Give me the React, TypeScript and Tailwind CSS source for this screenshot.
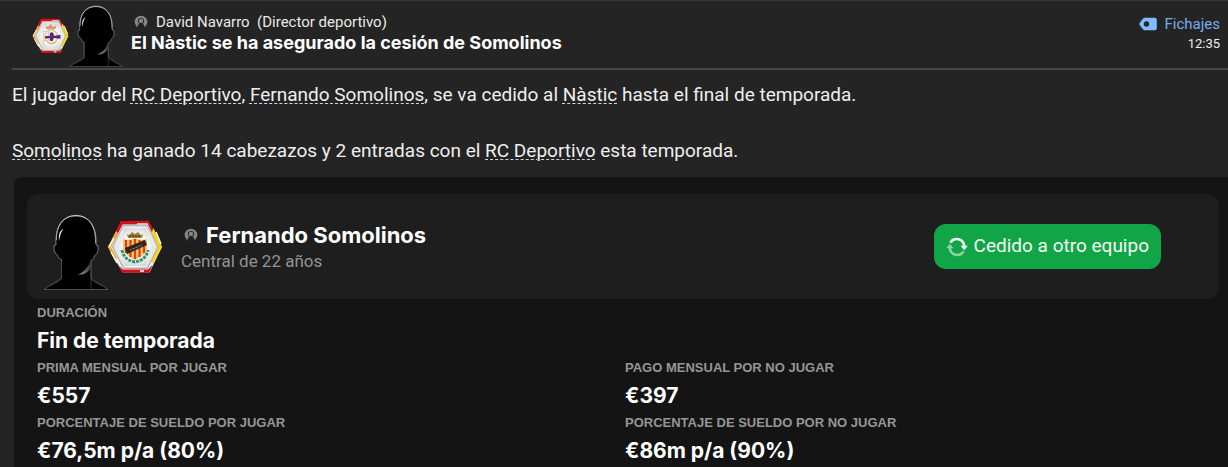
import type { ReactNode } from "react";

type TextLinkProps = {
  children: ReactNode;
};

type TermProps = {
  label: string;
  value: string;
  className?: string;
};

function TextLink({ children }: TextLinkProps) {
  return (
    <a href="#" className="underline decoration-gray-300 decoration-dashed decoration-1 underline-offset-2">
      {children}
    </a>
  );
}

function Term({ label, value, className = "" }: TermProps) {
  return (
    <div className={className}>
      <dt className="font-['Liberation_Sans',sans-serif] text-[13px] leading-6 font-bold text-[#969696] uppercase">
        {label}
      </dt>
      <dd className="font-[Inter,sans-serif] text-[21px] leading-[31px] font-bold text-white">{value}</dd>
    </div>
  );
}

function PersonIcon() {
  return (
    <svg viewBox="0 0 14 14" className="size-3.5 shrink-0" aria-hidden="true">
      <circle cx="7" cy="7" r="6.300" fill="#858585" />
      <path d="M3.400 14V12.200C3.400 10 5 8.600 7 8.600S10.600 10 10.600 12.200V14Z" fill="#222" />
      <circle cx="7" cy="6" r="3.100" fill="#222" />
      <circle cx="7" cy="5.900" r="2.200" fill="#858585" />
    </svg>
  );
}

function TagIcon() {
  return (
    <svg viewBox="0 0 18 14" className="h-3.5 w-[18px]" aria-hidden="true">
      <path
        d="M5.600.8h10.200c1.200 0 2 .8 2 2v8.400c0 1.200-.8 2-2 2H5.600c-.6 0-1.100-.2-1.500-.7L.6 8.100c-.5-.7-.5-1.500 0-2.200L4.100 1.500c.4-.5.9-.7 1.500-.7Z"
        fill="#7ebcff"
      />
      <circle cx="7.500" cy="7" r="2.700" fill="#242424" />
    </svg>
  );
}

function SwapIcon() {
  return (
    <svg viewBox="0 0 22 20" className="h-5 w-[22px] shrink-0" aria-hidden="true">
      <path d="M4.400 5.600A7.500 7.500 0 0 1 18.200 9" fill="none" stroke="#f6fbf2" strokeWidth="2.600" />
      <path d="M14.600 8.800h7.200l-3.600 4.400Z" fill="#f6fbf2" />
      <path d="M17.600 14.400A7.500 7.500 0 0 1 3.800 11" fill="none" stroke="#8ed3a0" strokeWidth="2.600" />
      <path d="M.2 11.200h7.200L3.800 6.800Z" fill="#8ed3a0" />
    </svg>
  );
}

function Silhouette({ id, className }: { id: string; className: string }) {
  return (
    <svg viewBox="0 0 66 76" className={className} aria-hidden="true">
      <defs>
        <linearGradient id={`${id}-rim`} x1="0" y1="0" x2="0" y2="1">
          <stop offset="0" stopColor="#e4e4e4" />
          <stop offset=".35" stopColor="#8a8a8a" />
          <stop offset="1" stopColor="#555" />
        </linearGradient>
        <linearGradient id={`${id}-jaw`} x1="0" y1="0" x2="1" y2="0">
          <stop offset="0" stopColor="#aaa" />
          <stop offset="1" stopColor="#333" />
        </linearGradient>
      </defs>
      <path
        d="M1 75.500C6 71 14 69 18.500 64.500V45.500C16.500 45 15 43.500 14.500 41L12 39C11 36 10.500 33.500 11 31.500L13 31C12 14 19 1.500 33 1.500S54 14 53 31L55 31.500C55.500 34 55 37 54 39.500L51.500 42C51 44.500 50 46 48 46.500V64.500C52 69 60 71 65 75.500Z"
        fill="#000"
        stroke={`url(#${id}-rim)`}
        strokeWidth=".9"
      />
      <path d="M13.500 26C13 11 20 2 33 2S53 12 52.500 29" fill="none" stroke="#bbb" strokeWidth=".8" />
      <path d="M16 27C15.500 21 16 17 20.500 15C17.800 18 17 22 16 27Z" fill="#e8e8e8" />
      <path d="M35 60.500C42 58 46 52 48 45V54C45 59 40 61 35 60.500Z" fill={`url(#${id}-jaw)`} />
      <path d="M18.500 48V64L8 71M48 57V75" fill="none" stroke="#444" strokeWidth=".8" />
    </svg>
  );
}

function HexFrame({ id, children, className }: { id: string; children: ReactNode; className: string }) {
  return (
    <svg viewBox="0 0 56 54" className={className} aria-hidden="true">
      <defs>
        <radialGradient id={id}>
          <stop offset=".5" stopColor="#fff" />
          <stop offset="1" stopColor="#cfcfd1" />
        </radialGradient>
      </defs>
      <path d="M14.500 1.500H41.500L55 27L42.500 52.500H15.500L1 27Z" fill="#eee" />
      <path d="M15 3.200H28V0.800H41.500L55 27L52.500 28.500L40.500 3.200" fill="#d80d16" />
      <path d="M13.800 1H30V4.400H15.600L4 26.500L1 27Z" fill="#d80d16" />
      <path d="M46.500 8L55 27L46 43.500L43.500 41L51 27L44.500 13Z" fill="#f5d90a" />
      <path d="M1 27L9 11L11 13L4 27L10 38L8.500 41Z" fill="#efac31" />
      <path d="M12 46L15.500 52.700H42L45.500 45L41 49.500H16Z" fill="#d80d16" />
      <path d="M2 27L7 18M4 32L10 43M33 51H37M49 12L54 24" stroke="#fff" strokeWidth="1.500" />
      <path d="M16 5H40.500L51 27L40.500 48.500H16.500L5.500 27Z" fill={`url(#${id})`} stroke="#aaa" strokeWidth="1" />
      <path d="M17.500 7.500H39L48.500 27L39 46.500H18L8 27Z" fill="none" stroke="#f4f4f4" strokeWidth="1" />
      {children}
    </svg>
  );
}

function DeportivoBadge() {
  return (
    <HexFrame id="deportivo-face" className="h-9 w-[37px]">
      <path d="M20 11L24 13L28 9L32 13L37 11L35 17H22Z" fill="#d99a7c" />
      <circle cx="29" cy="28" r="10" fill="#f5f0e5" stroke="#d8c89d" strokeWidth="1.800" />
      <path d="M17 19V42M17 20H25V34H17" fill="none" stroke="#d5c59c" strokeWidth="1.300" />
      <path d="M20 27H27V23L30 21L33 24V27L43 25V31L33 30L31 35L27 34V30L20 31Z" fill="#5b2473" />
      <path d="M23 36Q30 42 37 35" fill="none" stroke="#d9bf71" strokeWidth="2" />
    </HexFrame>
  );
}

function NasticBadge() {
  return (
    <HexFrame id="nastic-face" className="-ml-0.5 h-[54px] w-14">
      <path d="M20 14L22 15L25 12L28 14L31 12L34 15L36 14L35 18H21Z" fill="#9c8242" />
      <path d="M22 16H34" stroke="#3f3c22" strokeWidth="1.500" strokeDasharray="2 1" />
      <path d="M15 30Q17 40 28 42Q39 40 41 30" fill="none" stroke="#2d936c" strokeWidth="3" strokeDasharray="3 1" />
      <path d="M16 19Q22 21 28 18Q34 21 40 19V29Q38 36 28 40Q18 36 16 29Z" fill="#f5c75c" />
      <path d="M19 20V33M23.500 20V37M28 19V39M32.500 20V37M37 20V33" stroke="#db3d2e" strokeWidth="2.200" />
      <path d="M18 28L38 20L40 25L20 34Z" fill="#30251c" />
      <path d="M23 30L35 25" stroke="#85755d" strokeWidth="1.300" strokeDasharray="2 1" />
    </HexFrame>
  );
}

function MessageHeader() {
  return (
    <header className="ml-3 flex h-[69px] items-start justify-between border-b-2 border-[#484848] pl-5">
      <div className="flex">
        <div className="flex items-center pt-1">
          <DeportivoBadge />
          <Silhouette id="director" className="-ml-0.5 h-[62px] w-[58px] self-end" />
        </div>
        <div className="pt-[11px] pl-1.5">
          <p className="flex items-center text-[15px] leading-5 text-[#e9e9e9]">
            <span className="mr-2 ml-[3px]">
              <PersonIcon />
            </span>
            David Navarro&nbsp; (Director deportivo)
          </p>
          <h1 className="font-[Inter,sans-serif] text-lg leading-[22px] font-bold text-white">
            El Nàstic se ha asegurado la cesión de Somolinos
          </h1>
        </div>
      </div>
      <div className="pt-[11px] pr-2 text-right">
        <a href="#" className="flex items-center gap-2 text-[15px] leading-6 text-[#75aeea]">
          <TagIcon />
          Fichajes
        </a>
        <time className="block text-[13px] leading-4 text-[#ededed]">12:35</time>
      </div>
    </header>
  );
}

function PlayerCard() {
  return (
    <section className="flex h-[105px] items-center justify-between rounded-xl bg-[#1e1e1e] pr-[58px] pl-4">
      <div className="flex items-center">
        <Silhouette id="player" className="mt-2.5 h-[76px] w-[66px]" />
        <NasticBadge />
        <div className="pl-[18px]">
          <h2 className="flex items-center gap-2 font-[Inter,sans-serif] text-[22px] leading-7 font-bold text-white">
            <span className="ml-[3px]">
              <PersonIcon />
            </span>
            Fernando Somolinos
          </h2>
          <p className="text-[17px] leading-6 text-[#949494]">Central de 22 años</p>
        </div>
      </div>
      <button
        type="button"
        className="flex h-[45px] items-center gap-1.5 rounded-xl bg-[#12a548] px-3 text-[19px] text-[#f6fbf2]"
      >
        <SwapIcon />
        Cedido a otro equipo
      </button>
    </section>
  );
}

export default function App() {
  return (
    <main className="min-h-screen overflow-hidden border-t border-[#353535] bg-[#242424] font-[Roboto,sans-serif]">
      <MessageHeader />
      <div className="px-3 pt-[11px] text-[19px] leading-7 text-[#efefef]">
        <p className="mb-7">
          El jugador del <TextLink>RC Deportivo</TextLink>, <TextLink>Fernando Somolinos</TextLink>, se va cedido al{" "}
          <TextLink>Nàstic</TextLink> hasta el final de temporada.
        </p>
        <p>
          <TextLink>Somolinos</TextLink> ha ganado 14 cabezazos y 2 entradas con el <TextLink>RC Deportivo</TextLink> esta
          temporada.
        </p>
      </div>
      <div className="mt-3 ml-3.5 rounded-tl-lg bg-[#141414] pt-[17px] pr-[9px] pb-1 pl-[13px]">
        <PlayerCard />
        <dl className="grid grid-cols-2 gap-x-1 pt-0.5 pr-2.5 pl-2.5">
          <Term label="Duración" value="Fin de temporada" className="col-span-2" />
          <Term label="Prima mensual por jugar" value="€557" />
          <Term label="Pago mensual por no jugar" value="€397" />
          <Term label="Porcentaje de sueldo por jugar" value="€76,5m p/a (80%)" />
          <Term label="Porcentaje de sueldo por no jugar" value="€86m p/a (90%)" />
        </dl>
      </div>
    </main>
  );
}
